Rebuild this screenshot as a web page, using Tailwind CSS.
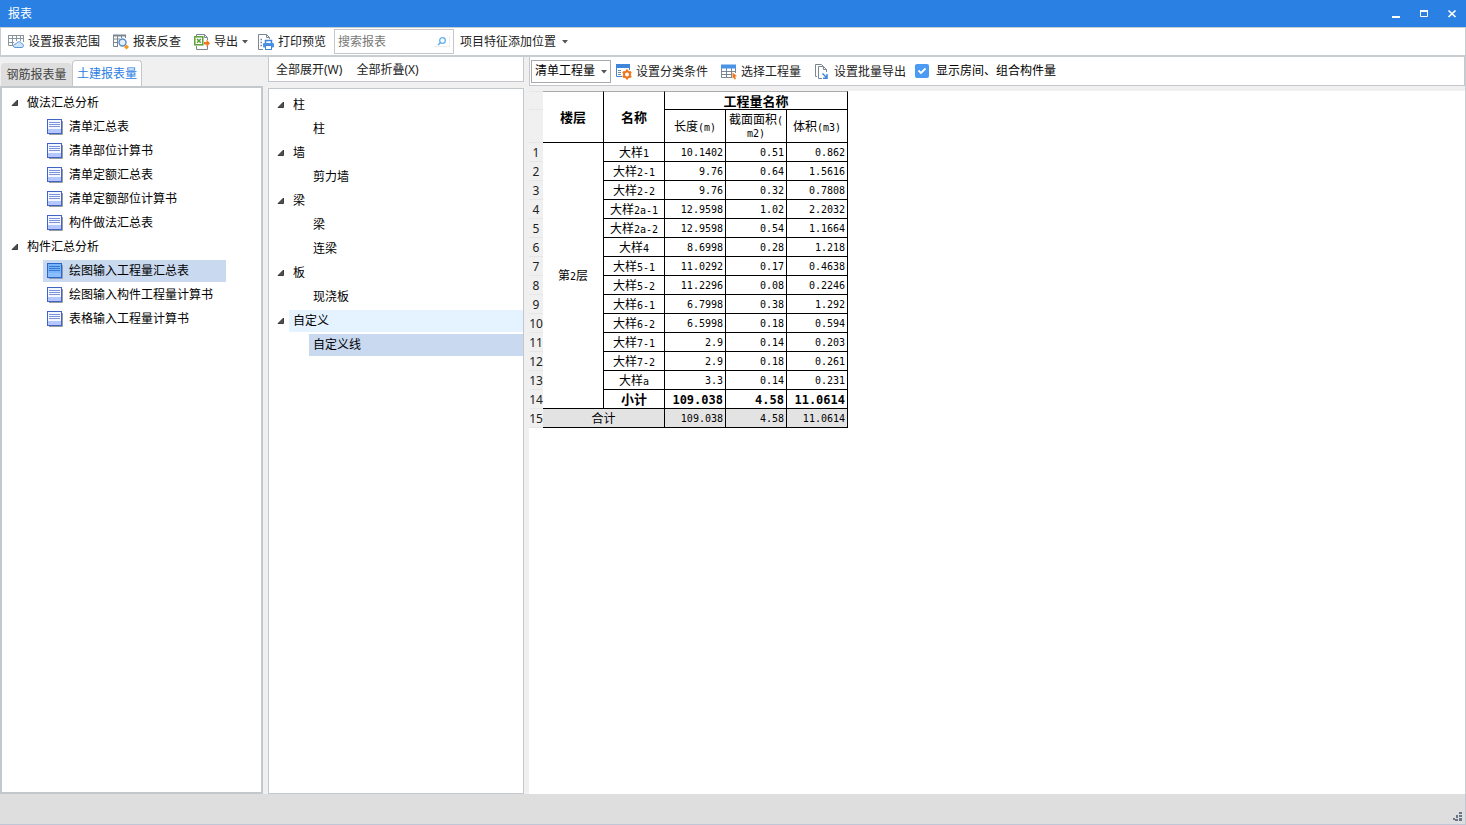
<!DOCTYPE html>
<html lang="zh-CN">
<head>
<meta charset="utf-8">
<title>报表</title>
<script src="https://cdn.jsdelivr.net/npm/@tailwindcss/browser@4"></script>
</head>
<body class="h-screen flex flex-col overflow-hidden bg-[#f0f0f0] text-[12px] leading-4 text-black font-['Noto_Sans','Noto_Sans_CJK_SC',sans-serif]">

<svg class="hidden" aria-hidden="true">
  <symbol id="leaf" viewBox="0 0 17 17">
    <path d="M2 15.500H15.500V2" fill="none" stroke="#9a9ca4"/>
    <rect x=".5" y=".5" width="14" height="14" fill="#f4f7ff" stroke="#4262c8"/>
    <rect x="1" y="10" width="13" height="4" fill="#b4c8fb"/>
    <path d="M2 3.500H13M2 5.500H13M2 7.500H13" stroke="#7c95dc"/>
  </symbol>
  <symbol id="leaf-on" viewBox="0 0 17 17">
    <path d="M2 15.500H15.500V2" fill="none" stroke="#8f9db8"/>
    <rect x=".5" y=".5" width="14" height="14" fill="#78b4f7" stroke="#2c66c8"/>
    <rect x="1" y="10" width="13" height="4" fill="#8cbefc"/>
    <path d="M2 3.500H13M2 5.500H13M2 7.500H13" stroke="#3579d2"/>
  </symbol>
  <symbol id="open" viewBox="0 0 8 8"><path d="M6.500 1V6.500H1Z" fill="#505050" stroke="#222" stroke-width=".8"/></symbol>
  <symbol id="down" viewBox="0 0 6 4"><path d="M0 0H6L3 3.500Z" fill="#555"/></symbol>
</svg>

<header class="h-[27px] shrink-0 flex items-center justify-between bg-[#2b80e3] text-white pl-2 pr-2">
  <h1>报表</h1>
  <div class="flex gap-[16px]">
    <button aria-label="最小化" class="w-3 h-3 grid place-items-center"><svg class="w-3 h-3" viewBox="0 0 12 12"><path d="M2 9H10" stroke="#fff" stroke-width="2"/></svg></button>
    <button aria-label="最大化" class="w-3 h-3 grid place-items-center"><svg class="w-3 h-3" viewBox="0 0 12 12"><path d="M2.500 3V8.500H9.500V3" stroke="#fff" fill="none"/><path d="M2 3H10" stroke="#fff" stroke-width="2"/></svg></button>
    <button aria-label="关闭" class="w-3 h-3 grid place-items-center"><svg class="w-3 h-3" viewBox="0 0 12 12"><path d="M2.500 2.500L9.500 9M9.500 2.500L2.500 9" stroke="#fff" stroke-width="1.700"/></svg></button>
  </div>
</header>

<nav class="h-[30px] shrink-0 flex items-center gap-[5px] px-1 bg-white border-t border-b-2 border-x border-[#c8cdd2] text-[#222]">
  <button class="flex items-center gap-1 pl-[3px] pr-1">
    <svg class="w-4 h-4" viewBox="0 0 16 16" fill="none"><path d="M.5 1V11.500H5M.5 4.500H15M.5 8.500H6M4.500 1V11M8.500 1V7M12.500 1V7M15.500 1V8" stroke="#8a949c"/><path d="M0 1.500H16" stroke="#8a949c"/><path d="M7 13.500C4.500 13 5 10 8 10C8.500 7.500 13 7 13.500 9.500C16 9.500 16 13.500 14 13.500Z" fill="#cfe5fa" stroke="#5b9ad8"/></svg>
    设置报表范围</button>
  <button class="flex items-center gap-1 px-1">
    <svg class="w-4 h-4" viewBox="0 0 16 16" fill="none"><path d="M.5 1V12.500H5M.5 5H7M.5 8.500H5M4.500 1V12M8.500 1V4M12.500 1V4" stroke="#7b8790"/><path d="M0 1.500H13" stroke="#7b8790" stroke-width="2"/><circle cx="9.500" cy="8.500" r="3.500" fill="#e3effb" stroke="#5b8cc4" stroke-width="1.400"/><path d="M13.500 10.500L16 13L13.500 15.500L11 13Z" fill="#f39a1e"/></svg>
    报表反查</button>
  <button class="flex items-center gap-1 pl-1">
    <svg class="w-4 h-4" viewBox="0 0 16 16" fill="none"><path d="M2.500 2V.5H10.500L13.500 3.500V6M2.500 12V15.500H13.500V12M10.500 .5V3.500H13" stroke="#7b8790"/><rect x=".8" y="2.800" width="8" height="8" fill="#fff" stroke="#5c9f3a" stroke-width="1.500"/><path d="M3 5L6.800 8.800M6.800 5L3 8.800" stroke="#5c9f3a" stroke-width="1.500"/><path d="M10 8H12.500V5.500L16 9.300L12.500 13V10.500H10Z" fill="#f0761e"/></svg>
    导出
    <svg class="w-1.5 h-1"><use href="#down"/></svg></button>
  <button class="flex items-center gap-1 pl-[5px] pr-[3px]">
    <svg class="w-4 h-4" viewBox="0 0 16 16" fill="none"><path d="M5 15.500H.5V.5H8.500L11.500 3.500V5M8.500 .5V3.500H11" stroke="#7b8790"/><path d="M2.500 5.500H4M2.500 8.500H4M2.500 11.500H4" stroke="#7b8790" stroke-width="1.500"/><path d="M7.500 9V6.500H13.500V9" stroke="#3f86da" stroke-width="1.500"/><rect x="5" y="9" width="11" height="4.500" rx="1" fill="#4b93e6"/><rect x="7.500" y="11.500" width="6" height="4" fill="#fff" stroke="#3f86da"/></svg>
    打印预览</button>
  <div class="flex items-center w-[120px] h-[25px] border border-[#c4c8cc] bg-white">
    <input aria-label="搜索报表" placeholder="搜索报表" class="flex-1 min-w-0 pl-[3px] outline-none placeholder:text-[#777]">
    <button aria-label="搜索" class="w-4 h-[11px] mr-[3px] border-b border-r border-[#eee] grid place-items-center"><svg class="w-[10px] h-[10px]" viewBox="0 0 10 10" fill="none"><circle cx="5.500" cy="4.500" r="2.800" stroke="#5fb0ea" stroke-width="1.300"/><path d="M3.500 6.500L1 9" stroke="#5fb0ea" stroke-width="1.500"/></svg></button>
  </div>
  <button class="flex items-center gap-1.5 px-px">项目特征添加位置
    <svg class="w-1.5 h-1"><use href="#down"/></svg></button>
</nav>

<main class="flex-1 min-h-0 flex gap-[5px] border-r border-[#c8cdd2]">
  <section class="w-[263px] shrink-0 flex flex-col pt-[3px]">
    <div class="flex items-end h-[26px]" role="tablist">
      <button role="tab" aria-selected="false" class="h-[23px] w-[71px] ml-px bg-[#dedede] text-[#444] rounded-t text-center">钢筋报表量</button>
      <button role="tab" aria-selected="true" class="h-[26px] w-[70px] bg-white border border-b-0 border-[#c4c8cc] rounded-t text-[#2b80e3] text-center">土建报表量</button>
    </div>
    <ul class="flex-1 border-2 border-[#c3c8cd] bg-white pt-[3px] pl-[9px] [&_li]:block [&_button]:flex [&_button]:items-center" role="tree">
      <li><button class="h-6 gap-2"><svg class="w-2 h-2"><use href="#open"/></svg>做法汇总分析</button></li>
      <li class="pl-8"><button class="h-6 pl-1 gap-[5px]"><svg class="w-[17px] h-[17px]"><use href="#leaf"/></svg>清单汇总表</button></li>
      <li class="pl-8"><button class="h-6 pl-1 gap-[5px]"><svg class="w-[17px] h-[17px]"><use href="#leaf"/></svg>清单部位计算书</button></li>
      <li class="pl-8"><button class="h-6 pl-1 gap-[5px]"><svg class="w-[17px] h-[17px]"><use href="#leaf"/></svg>清单定额汇总表</button></li>
      <li class="pl-8"><button class="h-6 pl-1 gap-[5px]"><svg class="w-[17px] h-[17px]"><use href="#leaf"/></svg>清单定额部位计算书</button></li>
      <li class="pl-8"><button class="h-6 pl-1 gap-[5px]"><svg class="w-[17px] h-[17px]"><use href="#leaf"/></svg>构件做法汇总表</button></li>
      <li><button class="h-6 gap-2"><svg class="w-2 h-2"><use href="#open"/></svg>构件汇总分析</button></li>
      <li class="pl-8 py-px"><button class="h-[22px] w-[183px] pl-1 gap-[5px] bg-[#c9d9f0]"><svg class="w-[17px] h-[17px]"><use href="#leaf-on"/></svg>绘图输入工程量汇总表</button></li>
      <li class="pl-8"><button class="h-6 pl-1 gap-[5px]"><svg class="w-[17px] h-[17px]"><use href="#leaf"/></svg>绘图输入构件工程量计算书</button></li>
      <li class="pl-8"><button class="h-6 pl-1 gap-[5px]"><svg class="w-[17px] h-[17px]"><use href="#leaf"/></svg>表格输入工程量计算书</button></li>
    </ul>
  </section>

  <section class="w-[256px] shrink-0 flex flex-col gap-[6px]">
    <div class="h-[25px] flex items-center gap-[14px] pt-0.5 pl-[7px] border border-t-0 border-[#c4c8cc] bg-white text-[#222]">
      <button>全部展开(W)</button>
      <button>全部折叠(X)</button>
    </div>
    <ul class="flex-1 border border-[#c3c8cd] bg-white pt-1 pl-2 [&_button]:flex [&_button]:items-center" role="tree">
      <li><button class="h-6 gap-2"><svg class="w-2 h-2"><use href="#open"/></svg>柱</button></li>
      <li class="pl-9"><button class="h-6">柱</button></li>
      <li><button class="h-6 gap-2"><svg class="w-2 h-2"><use href="#open"/></svg>墙</button></li>
      <li class="pl-9"><button class="h-6">剪力墙</button></li>
      <li><button class="h-6 gap-2"><svg class="w-2 h-2"><use href="#open"/></svg>梁</button></li>
      <li class="pl-9"><button class="h-6">梁</button></li>
      <li class="pl-9"><button class="h-6">连梁</button></li>
      <li><button class="h-6 gap-2"><svg class="w-2 h-2"><use href="#open"/></svg>板</button></li>
      <li class="pl-9"><button class="h-6">现浇板</button></li>
      <li class="py-px"><button class="w-full gap-1"><svg class="w-2 h-2 shrink-0"><use href="#open"/></svg><span class="flex-1 h-[22px] leading-[22px] pl-1 text-left bg-[#e5f2ff]">自定义</span></button></li>
      <li class="pl-8 py-px"><button class="h-[22px] w-full pl-1 bg-[#c9d9f0]">自定义线</button></li>
    </ul>
  </section>

  <section class="flex-1 min-w-0 flex flex-col gap-[5px]">
    <div class="h-[29px] shrink-0 flex items-center pl-px border border-t-0 border-[#c4c8cc] bg-white text-[#222]">
      <div class="relative w-20 mr-[5px]">
        <select aria-label="工程量类型" class="appearance-none block w-full h-[23px] border border-[#aaa] bg-white pl-[3px] text-black"><option>清单工程量</option></select>
        <svg class="absolute right-1 top-[10px] w-1.5 h-1 pointer-events-none"><use href="#down"/></svg>
      </div>
      <button class="flex items-center gap-1 pt-px mr-[13px]">
        <svg class="w-4 h-4" viewBox="0 0 16 16" fill="none"><path d="M.5 1V12.500H6M13.500 1V6" stroke="#3f86da"/><path d="M0 2H14" stroke="#3f86da" stroke-width="4"/><path d="M2 6.500H5M2 8.500H5M2 10.500H5" stroke="#7b8790"/><circle cx="11" cy="10.500" r="3" fill="#fff" stroke="#f0761e" stroke-width="2"/><path d="M11 5.500V7M11 14V15.500M6.700 8L8 8.700M14 12.300L15.300 13M6.700 13L8 12.300M14 8.700L15.300 8" stroke="#f0761e" stroke-width="2"/></svg>
        设置分类条件</button>
      <button class="flex items-center gap-1 pt-px mr-[13px]">
        <svg class="w-4 h-4" viewBox="0 0 16 16" fill="none"><path d="M.5 4V13.500H11M14.500 4V9M.5 7.500H14M.5 10.500H11M5.500 4V13M10.500 4V13" stroke="#7b8790"/><path d="M0 2.500H15" stroke="#4b93e6" stroke-width="4"/><path d="M11.500 8.500L16 12L14 12.500L15 15L13.500 15.500L12.700 13.500L11.500 14.500Z" fill="#f0761e"/></svg>
        选择工程量</button>
      <button class="flex items-center gap-1 pt-px mr-[9px]">
        <svg class="w-4 h-4" viewBox="0 0 16 16" fill="none"><path d="M3 12.500H1.500V.5H7.500L9 2" stroke="#7b8790"/><path d="M8 14.500H4.500V2.500H9.500L12.500 5.500V8M9.500 2.500V5.500H12.500" stroke="#7b8790"/><path d="M8.500 9.500L12.500 13.500M13 10V14.200H9" stroke="#3f86da" stroke-width="1.500"/></svg>
        设置批量导出</button>
      <label class="flex items-center gap-[7px] text-black"><span class="relative w-3.5 h-3.5">
        <input type="checkbox" checked class="appearance-none block w-3.5 h-3.5 rounded-xs bg-[#4b9bf5]">
        <svg class="absolute inset-0 w-3.5 h-3.5 pointer-events-none" viewBox="0 0 14 14" fill="none"><path d="M3.500 6.500L6 9L10.500 4.500" stroke="#fff" stroke-width="1.800"/></svg></span>
        显示房间、组合构件量</label>
    </div>
    <div class="flex-1 min-h-0 bg-white overflow-hidden">
      <table class="table-fixed w-[319px] border-separate border-spacing-0 font-['DejaVu_Sans_Mono','Noto_Sans_CJK_SC',monospace] leading-3 [&_td]:h-[19px] [&_td]:p-0 [&_td]:pt-0.5 [&_td]:pr-0.5 [&_td]:border-r [&_td]:border-b [&_td]:border-black [&_td]:text-right [&_td]:text-[10px] [&_th]:p-0 [&_th]:pt-0.5 [&_th]:font-normal [&_th]:border-r [&_th]:border-b [&_th]:border-black [&_th:first-child]:border-[#e6e6e6] [&_th:first-child]:border-r-0 [&_th:first-child]:bg-[#f0f0f0] [&_th:first-child]:text-[#222] [&_th:first-child]:font-['Noto_Sans',sans-serif] [&_span]:text-[10px]">
        <colgroup><col class="w-[14px]"><col class="w-[61px]"><col class="w-[61px]"><col class="w-[61px]"><col class="w-[61px]"><col class="w-[61px]"></colgroup>
        <thead class="[&_b]:text-[13px]">
          <tr class="h-[19px] [&_th]:border-t [&_th]:border-t-[#aaa]"><th></th><th rowspan="2"><b>楼层</b></th><th rowspan="2"><b>名称</b></th><th colspan="3"><b>工程量名称</b></th></tr>
          <tr class="h-[33px]"><th></th><th>长度<span>(m)</span></th><th>截面面积<span>(<br>m2)</span></th><th>体积<span>(m3)</span></th></tr>
        </thead>
        <tbody>
          <tr><th>1</th><th rowspan="14">第<span>2</span>层</th><th>大样<span>1</span></th><td>10.1402</td><td>0.51</td><td>0.862</td></tr>
          <tr><th>2</th><th>大样<span>2-1</span></th><td>9.76</td><td>0.64</td><td>1.5616</td></tr>
          <tr><th>3</th><th>大样<span>2-2</span></th><td>9.76</td><td>0.32</td><td>0.7808</td></tr>
          <tr><th>4</th><th>大样<span>2a-1</span></th><td>12.9598</td><td>1.02</td><td>2.2032</td></tr>
          <tr><th>5</th><th>大样<span>2a-2</span></th><td>12.9598</td><td>0.54</td><td>1.1664</td></tr>
          <tr><th>6</th><th>大样<span>4</span></th><td>8.6998</td><td>0.28</td><td>1.218</td></tr>
          <tr><th>7</th><th>大样<span>5-1</span></th><td>11.0292</td><td>0.17</td><td>0.4638</td></tr>
          <tr><th>8</th><th>大样<span>5-2</span></th><td>11.2296</td><td>0.08</td><td>0.2246</td></tr>
          <tr><th>9</th><th>大样<span>6-1</span></th><td>6.7998</td><td>0.38</td><td>1.292</td></tr>
          <tr><th>10</th><th>大样<span>6-2</span></th><td>6.5998</td><td>0.18</td><td>0.594</td></tr>
          <tr><th>11</th><th>大样<span>7-1</span></th><td>2.9</td><td>0.14</td><td>0.203</td></tr>
          <tr><th>12</th><th>大样<span>7-2</span></th><td>2.9</td><td>0.18</td><td>0.261</td></tr>
          <tr><th>13</th><th>大样<span>a</span></th><td>3.3</td><td>0.14</td><td>0.231</td></tr>
          <tr class="[&_td]:text-[12px] [&_td]:font-bold"><th>14</th><th><b class="text-[13px]">小计</b></th><td>109.038</td><td>4.58</td><td>11.0614</td></tr>
          <tr class="[&_td]:bg-[#e3e3e3]"><th>15</th><th colspan="2" class="bg-[#e3e3e3]">合计</th><td>109.038</td><td>4.58</td><td>11.0614</td></tr>
        </tbody>
      </table>
    </div>
  </section>
</main>

<footer class="h-[31px] shrink-0 flex items-end justify-end pr-[3px] pb-[3px] bg-[#dededf] border-b border-r border-[#c0c6d6]">
  <svg class="w-[9px] h-[9px]" viewBox="0 0 9 9" fill="#6b7684"><path d="M6 0h3v2h-3zM3 3h2v3h-2zM6 3h3v2h-3zM0 6h2v2h-2zM2 7h3v2h-3zM6 6h3v3h-3z"/></svg>
</footer>
</body>
</html>
